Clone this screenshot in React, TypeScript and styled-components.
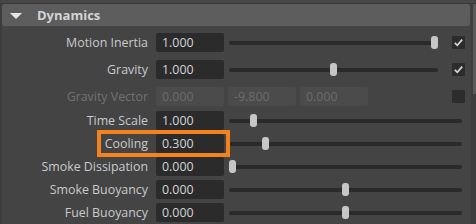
import React from "react";
import styled, { createGlobalStyle } from "styled-components";

const GlobalStyle = createGlobalStyle`
  html, body {
    margin: 0;
    padding: 0;
    background: #444444;
  }
`;

interface Attr {
  label: string;
  value: string;
  pos: number;
  check?: boolean;
  tall?: number;
}

const attrs: Attr[] = [
  { label: "Motion Inertia", value: "1.000", pos: 1, check: true, tall: 27 },
  { label: "Gravity", value: "1.000", pos: 0.5, check: true, tall: 27 },
];

const rest: Attr[] = [
  { label: "Time Scale", value: "1.000", pos: 0.093 },
  { label: "Cooling", value: "0.300", pos: 0.146 },
  { label: "Smoke Dissipation", value: "0.000", pos: 0 },
  { label: "Smoke Buoyancy", value: "0.000", pos: 0.5 },
  { label: "Fuel Buoyancy", value: "0.000", pos: 0.5 },
];

const App = () => {
  return (
    <Page>
      <GlobalStyle />
      <TopStrip />
      <Main>
        <Rail />
        <Content>
          <Header>
            <Arrow />
            <HeaderTitle>Dynamics</HeaderTitle>
          </Header>
          <Rows>
            {attrs.map((a) => (
              <Row key={a.label} $h={a.tall || 23}>
                <Label>{a.label}</Label>
                <Field>{a.value}</Field>
                <Slider $short>
                  <Track />
                  <Handle $pos={a.pos} />
                </Slider>
                <CheckBox>
                  <svg width="13" height="13" viewBox="0 0 13 13">
                    <polyline points="2.8,6.8 5.3,9.3 10.2,3.6" fill="none" stroke="#d6d6d6" strokeWidth="1.7" />
                  </svg>
                </CheckBox>
              </Row>
            ))}
            <Row $h={26}>
              <Label $disabled>Gravity Vector</Label>
              <VectorFields>
                <Field $disabled>0.000</Field>
                <Field $disabled>-9.800</Field>
                <Field $disabled>0.000</Field>
              </VectorFields>
              <CheckBox />
            </Row>
            {rest.map((a) => (
              <Row key={a.label} $h={23}>
                <Label>{a.label}</Label>
                <Field>{a.value}</Field>
                <Slider>
                  <Track />
                  <Handle $pos={a.pos} />
                </Slider>
              </Row>
            ))}
          </Rows>
        </Content>
        <ScrollTrack>
          <ScrollThumb />
        </ScrollTrack>
      </Main>
      <Callout />
    </Page>
  );
};

export default App;

const Page = styled.div`
  position: relative;
  width: 476px;
  height: 224px;
  overflow: hidden;
  background: #444444;
  display: flex;
  flex-direction: column;
  font-family: "Open Sans", "DejaVu Sans", sans-serif;
`;

const TopStrip = styled.div`
  height: 3px;
  background: #474747;
  border-bottom: 1px solid #383838;
  flex-shrink: 0;
`;

const Main = styled.div`
  flex: 1;
  display: flex;
`;

const Rail = styled.div`
  width: 2px;
  background: #3c3c3c;
`;

const Content = styled.div`
  width: 469px;
  display: flex;
  flex-direction: column;
`;

const Header = styled.div`
  height: 22px;
  margin-right: 1px;
  background: #5d5d5d;
  border-radius: 3px;
  display: flex;
  align-items: center;
`;

const Arrow = styled.div`
  width: 0;
  height: 0;
  margin-left: 8px;
  margin-top: 1px;
  border-left: 6px solid transparent;
  border-right: 6px solid transparent;
  border-top: 6px solid #e6e6e6;
`;

const HeaderTitle = styled.span`
  margin-left: 15px;
  font-size: 13px;
  font-weight: bold;
  color: #d2d4d6;
`;

const Rows = styled.div`
  padding-top: 3px;
  display: flex;
  flex-direction: column;
`;

const Row = styled.div<{ $h: number }>`
  height: ${(p) => p.$h}px;
  display: flex;
  align-items: center;
  padding-right: 6px;
`;

const Label = styled.div<{ $disabled?: boolean }>`
  width: 146px;
  margin-right: 8px;
  text-align: right;
  font-size: 12.4px;
  white-space: nowrap;
  color: ${(p) => (p.$disabled ? "#727272" : "#c8cacc")};
`;

const Field = styled.div<{ $disabled?: boolean }>`
  width: 68px;
  height: 19px;
  box-sizing: border-box;
  padding-left: 6px;
  margin-right: 5px;
  border-radius: 2px;
  display: flex;
  align-items: center;
  font-size: 12.4px;
  background: ${(p) => (p.$disabled ? "#4b4b4b" : "#2b2b2b")};
  color: ${(p) => (p.$disabled ? "#6c6c6c" : "#d4d6d8")};
`;

const VectorFields = styled.div`
  display: flex;
  gap: 4px;

  & > div {
    margin-right: 0;
  }
`;

const Slider = styled.div<{ $short?: boolean }>`
  position: relative;
  width: ${(p) => (p.$short ? 209 : 233)}px;
  height: 13px;
  display: flex;
  align-items: center;
`;

const Track = styled.div`
  width: 100%;
  height: 4px;
  border-radius: 2px;
  background: #2a2a2a;
`;

const Handle = styled.div<{ $pos: number }>`
  position: absolute;
  top: 0;
  left: calc(${(p) => p.$pos} * (100% - 7px));
  width: 7px;
  height: 13px;
  border-radius: 3px;
  background: #c6c6c6;
`;

const CheckBox = styled.div`
  margin-left: auto;
  width: 13px;
  height: 13px;
  border-radius: 1px;
  background: #2c2c2c;
  display: flex;
`;

const ScrollTrack = styled.div`
  width: 5px;
  background: #3e3e3e;
  position: relative;
`;

const ScrollThumb = styled.div`
  margin-left: 2px;
  width: 3px;
  height: 90px;
  background: #5a5a5a;
`;

const Callout = styled.div`
  position: absolute;
  left: 97px;
  top: 130px;
  width: 133px;
  height: 27px;
  box-sizing: border-box;
  border: 4px solid #f5821f;
`;
